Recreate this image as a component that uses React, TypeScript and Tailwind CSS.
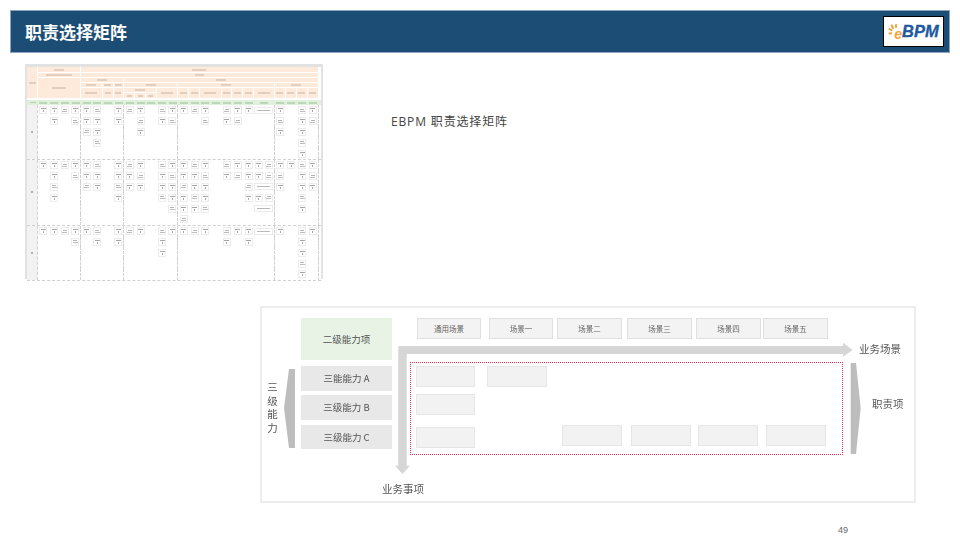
import React from "react";

const GRID =
  "grid grid-cols-[11px_repeat(20,10.8px)_20.7px_repeat(4,11px)]";

// columns with a dashed rule on the right side of the matrix
const DIVIDERS = [4, 8, 13, 21, 25];

// 21 = one box in the wide column, 99 = two boxes in it, 98 = wide box with a line
const SECTIONS: number[][][] = [
  [
    [1, 2, 3, 4, 5, 6, 8, 9, 10, 12, 13, 14, 15, 16, 18, 19, 20, 98, 22, 24, 25],
    [2, 4, 5, 6, 8, 10, 12, 13, 16, 18, 19, 22, 24, 25],
    [5, 6, 10, 22, 24],
    [6, 24],
    [24],
  ],
  [
    [1, 2, 3, 4, 5, 6, 8, 9, 10, 12, 13, 14, 15, 16, 18, 19, 20, 99, 22, 23, 24, 25],
    [2, 4, 5, 6, 8, 9, 10, 12, 13, 14, 15, 16, 18, 19, 20, 99, 22, 24, 25],
    [2, 5, 6, 8, 9, 10, 12, 13, 14, 15, 16, 20, 98, 22, 24, 25],
    [2, 8, 12, 13, 14, 15, 16, 20, 99, 24],
    [13, 14, 15, 16, 98, 24],
    [14],
  ],
  [
    [1, 2, 3, 4, 5, 6, 8, 9, 10, 12, 13, 14, 15, 16, 18, 19, 20, 98, 22, 24, 25],
    [4, 6, 8, 12, 18, 20, 24],
    [12, 24],
    [24],
    [24],
  ],
];

const COLUMNS = Array.from({ length: 25 }, (_, i) => i + 1);

const MiniBox = ({ kind }: { kind: number }) => (
  <div className="flex h-[8px] w-[8px] flex-col items-center justify-center gap-px border border-[#ececec] bg-white">
    {kind === 0 ? (
      <>
        <div className="h-px w-[5px] bg-[#a6a6a6]" />
        <div className="h-[2px] w-px bg-[#a6a6a6]" />
      </>
    ) : (
      <>
        <div className="h-px w-[4px] bg-[#b4b4b4]" />
        <div className="h-px w-[5px] bg-[#bdbdbd]" />
      </>
    )}
  </div>
);

const MatrixCell = ({ col, row, items }: { col: number; row: number; items: number[] }) => {
  const divider = DIVIDERS.includes(col);
  const wideKind = items.includes(99) ? 2 : items.includes(98) ? 1 : 0;
  return (
    <div
      className={`flex items-center justify-center gap-[2px] ${
        divider ? "border-r border-dashed border-[#d0d0d0]" : ""
      }`}
    >
      {col === 21 && wideKind === 2 && (
        <>
          <MiniBox kind={0} />
          <MiniBox kind={1} />
        </>
      )}
      {col === 21 && wideKind === 1 && (
        <div className="flex h-[7px] w-[19px] items-center justify-center border border-[#ececec] bg-white">
          <div className="h-px w-[13px] bg-[#b8b8b8]" />
        </div>
      )}
      {col !== 21 && items.includes(col) && <MiniBox kind={(col + row * 2) % 3 === 0 ? 1 : 0} />}
    </div>
  );
};

const Bar = ({ w = "w-[10px]" }: { w?: string }) => <div className={`h-[2px] ${w} bg-[#e3cdbc]`} />;

const HeadCell = ({ span, bar }: { span: string; bar?: string }) => (
  <div className={`flex items-center justify-center border-r border-b border-white bg-[#fdeadb] ${span}`}>
    <Bar w={bar} />
  </div>
);

const MatrixThumb = () => (
  <div className="h-[215px] w-[298px] shrink-0 border-x-2 border-t-[3px] border-[#e2e2e2] blur-[0.6px]">
    <div className={`${GRID} grid-rows-[6px_5px_5px_5px_5px_6px]`}>
      <HeadCell span="row-span-6" bar="w-[7px]" />
      <HeadCell span="col-span-4" />
      <HeadCell span="col-span-21" bar="w-[14px]" />
      <HeadCell span="col-span-4" bar="w-[26px]" />
      <HeadCell span="col-span-21" bar="w-[9px]" />
      <HeadCell span="col-span-4 row-span-4" bar="w-[14px]" />
      <HeadCell span="col-span-4" />
      <HeadCell span="col-span-17" />
      <HeadCell span="col-span-2" />
      <HeadCell span="" bar="w-[7px]" />
      <HeadCell span="" bar="w-[7px]" />
      <HeadCell span="col-span-5" />
      <HeadCell span="col-span-8" />
      <HeadCell span="col-span-4" />
      <HeadCell span="col-span-2 row-span-2" bar="w-[12px]" />
      <HeadCell span="row-span-2" bar="w-[6px]" />
      <HeadCell span="row-span-2" bar="w-[6px]" />
      <HeadCell span="col-span-3" />
      <HeadCell span="col-span-2 row-span-2" bar="w-[12px]" />
      <HeadCell span="row-span-2" bar="w-[7px]" />
      <HeadCell span="row-span-2" bar="w-[7px]" />
      <HeadCell span="col-span-2 row-span-2" bar="w-[12px]" />
      <HeadCell span="row-span-2" bar="w-[7px]" />
      <HeadCell span="row-span-2" bar="w-[7px]" />
      <HeadCell span="row-span-2" bar="w-[7px]" />
      <HeadCell span="row-span-2" bar="w-[12px]" />
      <HeadCell span="row-span-2" bar="w-[7px]" />
      <HeadCell span="row-span-2" bar="w-[7px]" />
      <HeadCell span="row-span-2" bar="w-[7px]" />
      <HeadCell span="row-span-2" bar="w-[7px]" />
      <HeadCell span="" bar="w-[5px]" />
      <HeadCell span="" bar="w-[5px]" />
      <HeadCell span="" bar="w-[5px]" />
    </div>
    <div className={`${GRID} mt-px h-[5px] bg-[#dff0dc]`}>
      <div className="flex items-center justify-center">
        <div className="h-px w-[6px] bg-[#b4cfb0]" />
      </div>
      {COLUMNS.map((c) => (
        <div key={c} className="flex items-center justify-center">
          <div className="h-[2px] w-[8px] bg-[#bcd6b8]" />
        </div>
      ))}
    </div>
    {SECTIONS.map((rows, s) => (
      <div key={s} className={`${GRID} auto-rows-[10.8px] border-b border-dashed border-[#d0d0d0]`}>
        <div
          className={`flex items-center justify-center border-r border-dashed border-[#d0d0d0] bg-[#f2f2f2] ${
            rows.length === 6 ? "row-span-6" : "row-span-5"
          }`}
        >
          <div className="h-[2px] w-[2px] bg-[#b0b0b0]" />
        </div>
        {rows.map((items, r) =>
          COLUMNS.map((c) => <MatrixCell key={`${r}-${c}`} col={c} row={r} items={items} />)
        )}
      </div>
    ))}
  </div>
);

const Logo = () => (
  <div className="flex h-[31px] w-[61px] items-center border border-black bg-white pl-[4px] font-['Liberation_Sans',sans-serif]">
    <div className="relative h-[16px] w-[14px]">
      <svg viewBox="0 0 14 16" className="absolute inset-0 h-full w-full" fill="none" stroke="#f2a33a" strokeWidth="2" strokeLinecap="round">
        <path d="M1.5 5 L3.5 6.2" />
        <path d="M3.8 1.5 L5 4" />
        <path d="M8 1 L8 3" />
        <path d="M1.5 9.5 L3.2 9.2" />
      </svg>
      <span className="absolute right-[0px] bottom-[-1px] text-[14px] leading-none font-bold text-[#f2a33a] italic">e</span>
    </div>
    <span className="text-[16.5px] leading-none font-bold text-[#20599f] italic [-webkit-text-stroke:0.3px_#20599f]">BPM</span>
  </div>
);

const ScenarioBox = ({ pos, label }: { pos: string; label: string }) => (
  <div className={`absolute top-[10px] flex h-[21px] items-center justify-center border border-[#e0e0e0] bg-[#f3f3f3] text-[7.5px] text-[#666] ${pos}`}>
    {label}
  </div>
);

const EmptyBox = ({ pos }: { pos: string }) => (
  <div className={`absolute h-[21px] border border-[#e6e6e6] bg-[#f2f2f2] ${pos}`} />
);

const LevelBox = ({ pos, label }: { pos: string; label: string }) => (
  <div className={`absolute left-[39px] flex w-[91px] items-center justify-center bg-[#e8e8e8] text-[9.5px] text-[#555] ${pos}`}>
    {label}
  </div>
);

const Diagram = () => (
  <div className="relative ml-[250px] mt-[27px] h-[197px] w-[656px] border-2 border-[#ececec] font-['Noto_Sans_CJK_SC',sans-serif] blur-[0.4px]">
    <svg viewBox="0 0 652 193" className="absolute inset-0 h-[193px] w-[652px]">
      <path d="M136.3 38 H581 V34.7 L590.7 42 L581 48.7 V46 H144.7 V157.7 H148 L140.5 166 L133 157.7 H136.3 Z" fill="#d6d6d6" />
      <polygon points="27,61 33,61 33,140 27,140 22,100" fill="#bdbdbd" />
      <polygon points="588.7,55 594,55 598.7,100 594,146 588.7,146" fill="#bdbdbd" />
    </svg>

    <div className="absolute left-[39px] top-[10px] flex h-[42px] w-[91px] items-center justify-center bg-[#e8f3e6] text-[9.5px] text-[#555]">
      二级能力项
    </div>
    <LevelBox pos="top-[58px] h-[25px]" label="三能能力 A" />
    <LevelBox pos="top-[87px] h-[25px]" label="三级能力 B" />
    <LevelBox pos="top-[117px] h-[24px]" label="三级能力 C" />

    <ScenarioBox pos="left-[155px] w-[64px]" label="通用场景" />
    <ScenarioBox pos="left-[227px] w-[64px]" label="场景一" />
    <ScenarioBox pos="left-[295px] w-[65px]" label="场景二" />
    <ScenarioBox pos="left-[365px] w-[65px]" label="场景三" />
    <ScenarioBox pos="left-[434px] w-[65px]" label="场景四" />
    <ScenarioBox pos="left-[501px] w-[65px]" label="场景五" />

    <div className="absolute left-[148px] top-[54px] h-[93px] w-[433px] border-[1.5px] border-dotted border-[#d8375c]" />
    <EmptyBox pos="left-[154px] top-[58px] w-[59px]" />
    <EmptyBox pos="left-[225px] top-[58px] w-[60px]" />
    <EmptyBox pos="left-[154px] top-[86px] w-[59px]" />
    <EmptyBox pos="left-[154px] top-[119px] w-[59px]" />
    <EmptyBox pos="left-[300px] top-[117px] w-[60px]" />
    <EmptyBox pos="left-[369px] top-[117px] w-[60px]" />
    <EmptyBox pos="left-[436px] top-[117px] w-[60px]" />
    <EmptyBox pos="left-[504px] top-[117px] w-[60px]" />

    <div className="absolute left-[5px] top-[72px] flex w-[11px] flex-col items-center text-[10.5px] leading-[13.5px] text-[#555]">
      <span>三</span>
      <span>级</span>
      <span>能</span>
      <span>力</span>
    </div>
    <div className="absolute left-[597px] top-[33px] text-[10.5px] leading-[15px] text-[#555]">业务场景</div>
    <div className="absolute left-[610px] top-[88px] text-[10.5px] leading-[15px] text-[#555]">职责项</div>
    <div className="absolute left-[120px] top-[173px] text-[10.5px] leading-[15px] text-[#555]">业务事项</div>
  </div>
);

export default function App() {
  return (
    <div className="h-[540px] w-[960px] overflow-hidden bg-white px-[10px] pt-[10px] font-['Noto_Sans_CJK_SC',sans-serif]">
      <header className="flex h-[43px] w-[940px] items-center justify-between border border-[#8ea6bd] bg-[#1c4e75] pr-[5px] pl-[14px]">
        <h1 className="text-[17px] font-bold text-white">职责选择矩阵</h1>
        <Logo />
      </header>

      <div className="mt-[11px] flex pl-[15px]">
        <MatrixThumb />
        <p className="mt-[49px] ml-[68px] font-['Open_Sans','Noto_Sans_CJK_SC',sans-serif] text-[12px] leading-[18px] tracking-[0.85px] text-[#444]">
          EBPM 职责选择矩阵
        </p>
      </div>

      <Diagram />

      <div className="mt-[21px] flex justify-end pr-[102px] font-['Liberation_Sans',sans-serif] text-[9px] leading-[12px] text-[#666]">
        49
      </div>
    </div>
  );
}
